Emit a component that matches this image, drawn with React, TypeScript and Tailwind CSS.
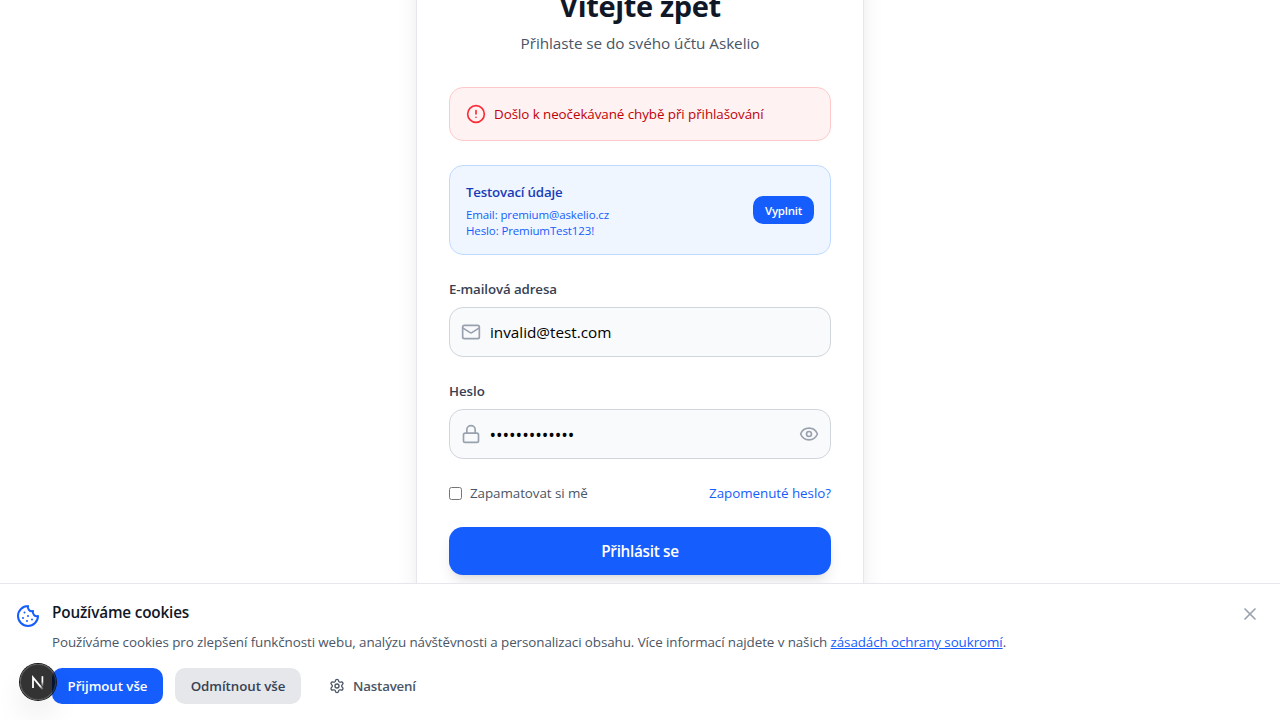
import React from "react";
import { CircleAlert, Cookie, Eye, Lock, Mail, Settings, X } from "lucide-react";

function ErrorAlert() {
  return (
    <div className="mb-6 flex items-center gap-2 rounded-[14px] border border-[#ffc9c9] bg-[#fef2f2] p-4">
      <CircleAlert className="size-5 shrink-0 text-[#fb2c36]" />
      <span className="text-[13.4px] leading-5 tracking-[-0.07px] whitespace-nowrap text-[#c10007]">Došlo k neočekávané chybě při přihlašování</span>
    </div>
  );
}

function TestCredentials() {
  return (
    <div className="mb-6 flex items-center justify-between rounded-[14px] border border-[#bedbff] bg-[#eff6ff] p-4">
      <div>
        <p className="mb-1 text-[13.3px] leading-5 font-semibold tracking-[-0.2px] text-[#193cb8]">Testovací údaje</p>
        <p className="pt-px -mb-px text-[11.5px] leading-4 tracking-[-0.12px] text-[#155dfc]">
          Email: premium@askelio.cz
          <br />
          Heslo: PremiumTest123!
        </p>
      </div>
      <button className="h-7 w-[61px] rounded-[10px] bg-[#155dfc] pt-px text-[11.5px] leading-4 font-semibold tracking-[-0.25px] text-white">Vyplnit</button>
    </div>
  );
}

function NextBadge() {
  return (
    <div className="fixed bottom-5 left-5 flex size-9 items-center justify-center rounded-full bg-black/80 shadow-[0_0_0_1px_#171717,inset_0_0_0_1px_rgba(255,255,255,0.14),0_16px_32px_-8px_rgba(0,0,0,0.24)]">
      <svg width="40" height="40" viewBox="0 0 40 40" fill="none" className="shrink-0">
        <defs>
          <linearGradient id="stem" x1="24" y1="14" x2="24" y2="25" gradientUnits="userSpaceOnUse">
            <stop stopColor="white" />
            <stop offset="0.5" stopColor="white" />
            <stop offset="1" stopColor="white" stopOpacity="0" />
          </linearGradient>
          <linearGradient id="diagonal" x1="18" y1="17" x2="25" y2="28" gradientUnits="userSpaceOnUse">
            <stop stopColor="white" />
            <stop offset="0.6" stopColor="white" />
            <stop offset="1" stopColor="white" stopOpacity="0" />
          </linearGradient>
        </defs>
        <path d="M15 26V15.4L24.8 27.4" stroke="url(#diagonal)" strokeWidth="1.8" />
        <path d="M24.4 14.2V25.5" stroke="url(#stem)" strokeWidth="1.7" />
      </svg>
    </div>
  );
}

function CookieBanner() {
  return (
    <div className="fixed inset-x-0 bottom-0 flex items-start gap-3 border-t border-gray-200 bg-white p-4">
      <Cookie className="mt-1 size-6 shrink-0 text-[#155dfc]" />
      <div className="flex-1">
        <h3 className="mb-2 text-[15.3px] leading-6 font-semibold tracking-[-0.17px] text-[#101828]">Používáme cookies</h3>
        <p className="mb-4 text-[13.4px] leading-5 tracking-[-0.088px] whitespace-nowrap text-[#4a5565]">
          Používáme cookies pro zlepšení funkčnosti webu, analýzu návštěvnosti a personalizaci obsahu. Více informací najdete v našich{" "}
          <a className="text-[#155dfc] underline">zásadách ochrany soukromí</a>.
        </p>
        <div className="flex gap-3">
          <button className="h-9 w-[111px] rounded-[10px] bg-[#155dfc] text-[13.3px] leading-5 font-semibold tracking-[-0.05px] whitespace-nowrap text-white">Přijmout vše</button>
          <button className="h-9 w-[126px] rounded-[10px] bg-[#e5e7eb] text-[13.3px] leading-5 font-semibold tracking-[-0.05px] whitespace-nowrap text-[#364153]">Odmítnout vše</button>
          <button className="flex h-9 items-center gap-2 px-4 text-[13.3px] leading-5 font-semibold tracking-[-0.18px] text-[#4a5565]">
            <Settings className="size-4" />
            Nastavení
          </button>
        </div>
      </div>
      <button className="p-1 text-[#99a1af]">
        <X className="size-5" />
      </button>
    </div>
  );
}

export default function App() {
  return (
    <div className="h-screen overflow-hidden bg-white font-['Open_Sans','Noto_Sans',sans-serif]">
      <main className="mx-auto -mt-[46px] h-[850px] w-[448px] border border-gray-200 bg-white p-8 shadow-xl">
        <h1 className="mb-[7px] pt-px text-center text-[29px] leading-9 font-bold tracking-[-0.35px] text-[#101828]">Vítejte zpět</h1>
        <p className="mb-8 text-center text-[15.3px] leading-6 tracking-[-0.06px] text-[#4a5565]">Přihlaste se do svého účtu Askelio</p>
        <ErrorAlert />
        <TestCredentials />
        <form className="flex flex-col gap-6">
          <div>
            <label className="mb-2 block text-[13.3px] leading-5 font-semibold tracking-[-0.1px] text-[#364153]">E-mailová adresa</label>
            <div className="flex h-[50px] items-center rounded-[14px] border border-[#d1d5dc] bg-[#f9fafb] px-[11px]">
              <Mail className="size-5 shrink-0 text-[#99a1af]" />
              <input type="text" readOnly defaultValue="invalid@test.com" className="ml-[9px] min-w-0 flex-1 text-[15.3px] leading-6 tracking-[-0.02px] text-black outline-none" />
            </div>
          </div>
          <div>
            <label className="mb-2 block text-[13.3px] leading-5 font-semibold tracking-[-0.05px] text-[#364153]">Heslo</label>
            <div className="flex h-[50px] items-center rounded-[14px] border border-[#d1d5dc] bg-[#f9fafb] px-[11px]">
              <Lock className="size-5 shrink-0 text-[#99a1af]" />
              <input type="password" readOnly defaultValue="invalidheslo1" className="ml-[8.5px] min-w-0 flex-1 pt-px text-[17.5px] leading-6 tracking-[-0.05px] text-black outline-none" />
              <Eye className="size-5 shrink-0 text-[#99a1af]" />
            </div>
          </div>
          <div className="flex items-center justify-between text-[13.4px] leading-5">
            <label className="flex items-center gap-2 tracking-[-0.07px] text-[#4a5565]">
              <input type="checkbox" className="size-[13px]" />
              Zapamatovat si mě
            </label>
            <a className="tracking-[-0.05px] text-[#155dfc]">Zapomenuté heslo?</a>
          </div>
          <button type="button" className="h-12 rounded-[14px] bg-[#155dfc] text-[15.3px] leading-6 font-semibold tracking-[-0.3px] text-white shadow-lg">Přihlásit se</button>
        </form>
      </main>
      <CookieBanner />
      <NextBadge />
    </div>
  );
}
